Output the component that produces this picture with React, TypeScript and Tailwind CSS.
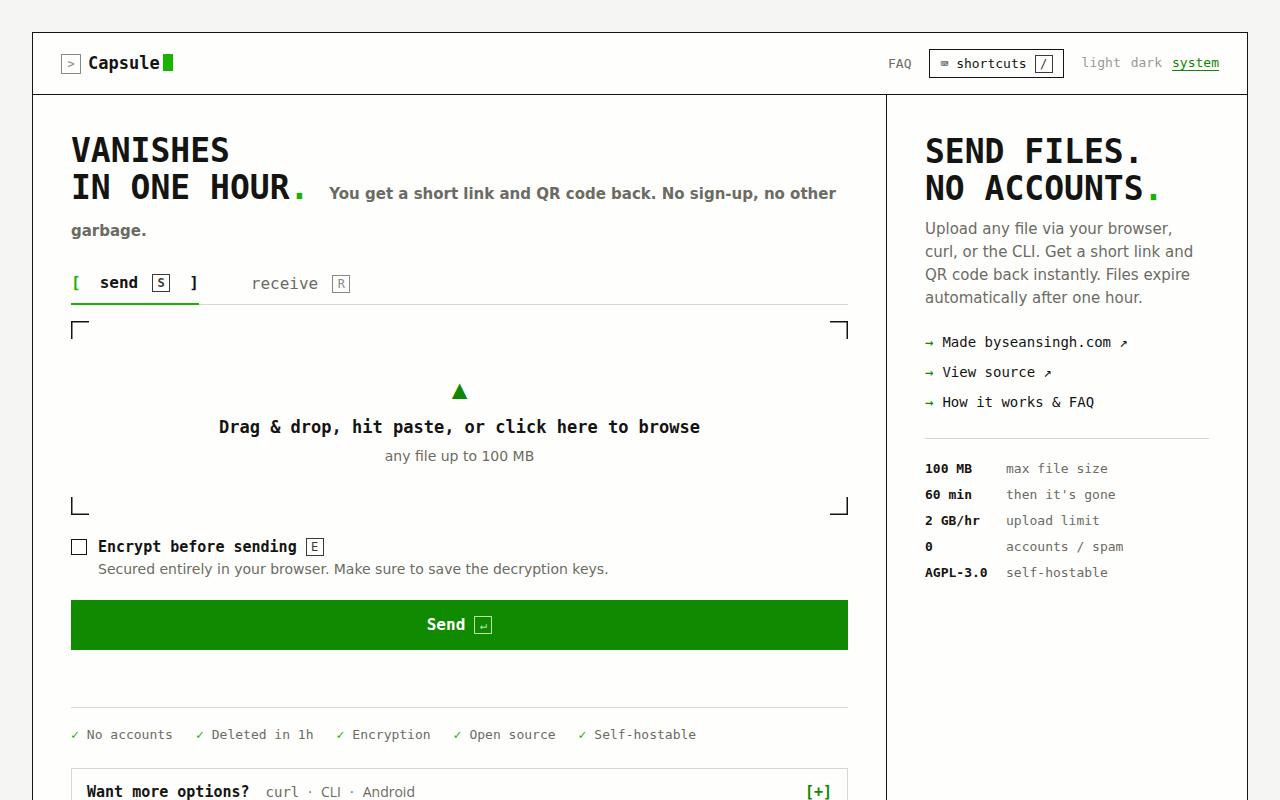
import React, { useState } from 'react';
import clsx from 'clsx';

const PERKS = ['No accounts', 'Deleted in 1h', 'Encryption', 'Open source', 'Self-hostable'];

const LINKS = [
  { label: 'Made byseansingh.com ↗', href: '#author' },
  { label: 'View source ↗', href: '#source' },
  { label: 'How it works & FAQ', href: '#faq' },
];

const LIMITS = [
  { value: '100 MB', label: 'max file size' },
  { value: '60 min', label: "then it's gone" },
  { value: '2 GB/hr', label: 'upload limit' },
  { value: '0', label: 'accounts / spam' },
  { value: 'AGPL-3.0', label: 'self-hostable' },
];

const THEMES = ['light', 'dark', 'system'];

const CORNERS = [
  'top-0 left-0',
  'top-0 right-0 rotate-90',
  'right-0 bottom-0 rotate-180',
  'bottom-0 left-0 -rotate-90',
];

const Key: React.FC<{ children: React.ReactNode; className?: string }> = ({ children, className }) => (
  <kbd
    className={clsx(
      "inline-flex h-[18px] min-w-[18px] items-center justify-center border px-1 font-['DejaVu_Sans_Mono',monospace] text-[12px] leading-none",
      className ?? 'border-[#3a3a37] text-[#3a3a37]',
    )}
  >
    {children}
  </kbd>
);

const Header: React.FC = () => {
  const [theme, setTheme] = useState('system');

  return (
    <header className="flex items-center justify-between border-b border-[#141412] px-7 py-4">
      <a href="#home" className="flex items-center text-[17px] leading-7 font-bold">
        <span className="mr-[7px] flex size-5 items-center justify-center border border-[#888884] text-[12px] leading-none font-normal text-[#888884]">
          &gt;
        </span>
        <span className="pb-[2px] leading-6">Capsule</span>
        <span className="ml-[3px] mb-[2px] h-[17px] w-[10px] bg-[#1ab300]" />
      </a>

      <nav className="flex items-center text-[13px] leading-5">
        <a href="#faq" className="mr-[18px] text-[#6b6b63]">FAQ</a>
        <button
          type="button"
          className="mr-[18px] flex h-[29px] items-center gap-2 border border-[#141412] px-[10px]"
        >
          <span>⌨ shortcuts</span>
          <Key>/</Key>
        </button>
        <div className="flex gap-[10px]">
          {THEMES.map((name) => (
            <button
              key={name}
              type="button"
              onClick={() => setTheme(name)}
              className={clsx(
                'border-b leading-[14px]',
                theme === name ? 'border-[#0f8700] text-[#0f8700]' : 'border-transparent text-[#9a9a92]',
              )}
            >
              {name}
            </button>
          ))}
        </div>
      </nav>
    </header>
  );
};

const DropZone: React.FC = () => (
  <button
    type="button"
    className="relative mt-4 flex w-full flex-col items-center px-6 pt-12 pb-[49px]"
  >
    {/* Corner brackets */}
    {CORNERS.map((corner) => (
      <svg
        key={corner}
        viewBox="0 0 18 18"
        fill="none"
        stroke="#141412"
        strokeWidth="1.5"
        className={clsx('absolute size-[18px]', corner)}
      >
        <path d="M0.75 18V0.75H18" />
      </svg>
    ))}

    <span className="text-[26px] leading-10 text-[#0f8700]">▲</span>
    <span className="mt-1 text-[17px] leading-7 font-bold">
      Drag &amp; drop, hit paste, or click here to browse
    </span>
    <span className="mt-[5px] font-['DejaVu_Sans',sans-serif] text-[14px] leading-5 text-[#6b6b63]">
      any file up to 100 MB
    </span>
  </button>
);

const SendPanel: React.FC = () => {
  const [encrypt, setEncrypt] = useState(false);

  return (
    <main className="px-[38px] pt-[37px]">
      <h1 className="text-[33px] leading-[37px] font-bold">
        VANISHES
        <br />
        IN ONE HOUR<span className="text-[#1ab300]">.</span>{' '}
        <span className="font-['DejaVu_Sans',sans-serif] text-[15px] leading-none text-[#6b6b63]">
          You get a short link and QR code back. No sign-up, no other garbage.
        </span>
      </h1>

      <div
        role="tablist"
        className="mt-5 flex h-[42px] items-stretch gap-[52px] border-b border-[#d6d6d2] text-[16px]"
      >
        <button
          type="button"
          role="tab"
          aria-selected="true"
          className="-mb-px flex items-center border-b-2 border-[#1ab300] font-bold"
        >
          <span className="text-[#1ab300]">[</span>
          <span className="mr-[14px] ml-[19px]">send</span>
          <Key>S</Key>
          <span className="ml-[19px]">]</span>
        </button>
        <button type="button" role="tab" aria-selected="false" className="flex items-center gap-[14px] text-[#6b6b63]">
          receive
          <Key className="border-[#888884] text-[#888884]">R</Key>
        </button>
      </div>

      <DropZone />

      <div className="mt-[22px] flex items-start">
        <input
          id="encrypt"
          type="checkbox"
          checked={encrypt}
          onChange={(e) => setEncrypt(e.target.checked)}
          className="mt-[2px] size-4 appearance-none border border-[#141412] checked:bg-[#0f8700]"
        />
        <label htmlFor="encrypt" className="ml-[11px]">
          <span className="flex items-center gap-[9px] text-[15px] leading-5 font-bold">
            Encrypt before sending
            <Key className="border-[#3a3a37] font-normal text-[#3a3a37]">E</Key>
          </span>
          <span className="block font-['DejaVu_Sans',sans-serif] text-[14px] leading-6 text-[#6b6b63]">
            Secured entirely in your browser. Make sure to save the decryption keys.
          </span>
        </label>
      </div>

      <button
        type="button"
        className="mt-[19px] flex h-[50px] w-full items-center justify-center gap-[9px] bg-[#108a00] text-[16px] font-bold text-white"
      >
        Send
        <Key className="border-[#b9e3a8] font-normal text-[#b9e3a8]">↵</Key>
      </button>

      <ul className="mt-[57px] flex flex-wrap gap-x-[23px] border-t border-[#d6d6d2] pt-[17px] text-[13px] leading-5 text-[#6b6b63]">
        {PERKS.map((perk) => (
          <li key={perk}>
            <span className="mr-2 text-[#1ab300]">✓</span>
            {perk}
          </li>
        ))}
      </ul>

      <details className="mt-[23px] border border-[#d6d6d2]">
        <summary className="flex list-none items-center px-[15px] py-[11px] text-[15px] leading-6 font-bold">
          Want more options?
          <span className="ml-4 flex gap-[9px] font-['Open_Sans',sans-serif] text-[14px] font-normal text-[#6b6b63]">
            <code className="font-['DejaVu_Sans_Mono',monospace]">curl</code>
            <span>·</span>
            <span>CLI</span>
            <span>·</span>
            <span>Android</span>
          </span>
          <span className="ml-auto text-[#0f8700]">[+]</span>
        </summary>
      </details>
    </main>
  );
};

const Sidebar: React.FC = () => (
  <aside className="border-l border-[#141412] px-[38px] pt-[38px]">
    <h2 className="text-[33px] leading-[37px] font-bold">
      SEND FILES.
      <br />
      NO ACCOUNTS<span className="text-[#1ab300]">.</span>
    </h2>
    <p className="mt-[11px] font-['DejaVu_Sans',sans-serif] text-[15px] leading-[23px] text-[#6b6b63]">
      Upload any file via your browser, curl, or the CLI. Get a short link and QR code back instantly. Files
      expire automatically after one hour.
    </p>

    <ul className="mt-[22px] flex flex-col gap-[10px] text-[14px] leading-5">
      {LINKS.map((link) => (
        <li key={link.label}>
          <span className="mr-[9px] text-[#0f8700]">→</span>
          <a href={link.href}>{link.label}</a>
        </li>
      ))}
    </ul>

    <dl className="mt-[26px] grid grid-cols-[65px_1fr] gap-x-4 gap-y-[6px] border-t border-[#d6d6d2] pt-5 text-[13px] leading-5">
      {LIMITS.map((limit) => (
        <React.Fragment key={limit.label}>
          <dt className="font-bold">{limit.value}</dt>
          <dd className="text-[#6b6b63]">{limit.label}</dd>
        </React.Fragment>
      ))}
    </dl>
  </aside>
);

export default function App() {
  return (
    <div className="min-h-screen bg-[#f5f5f3] px-8 pt-8 font-['DejaVu_Sans_Mono',monospace] text-[#141412]">
      <div className="flex min-h-screen flex-col border border-[#141412] bg-[#fefefd]">
        <Header />
        <div className="grid flex-1 grid-cols-[1fr_361px]">
          <SendPanel />
          <Sidebar />
        </div>
      </div>
    </div>
  );
}
